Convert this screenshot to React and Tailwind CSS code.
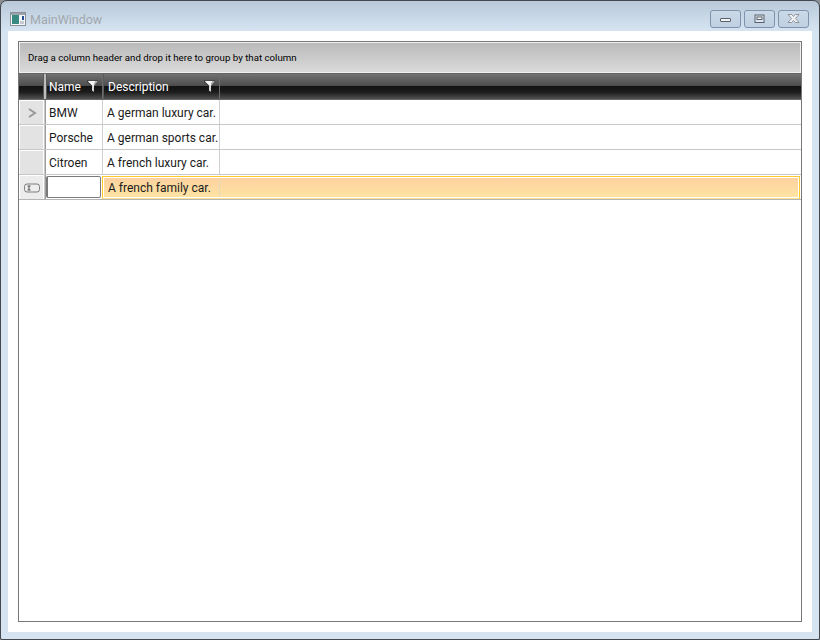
const font = { fontFamily: 'Roboto, "Open Sans", sans-serif' };

function Funnel() {
  return (
    <svg width="11" height="13" viewBox="0 0 11 13" className="block">
      <path d="M0 0.5H11V2L7.5 6V12.5L4.5 10.5V6L0 2Z" fill="#1e1e1e" opacity="0.6" />
      <path d="M1 1H10.5V2L7 6V12L5 10.5V5.5L1 1.8Z" fill="#a8a8a8" />
      <path d="M1.5 1H8.5L7 3.5L6.4 11.5L5.4 10.8V5.5L1.5 1.8Z" fill="#f5f5f5" />
    </svg>
  );
}

function HeaderCell({ className, label, filter }) {
  return (
    <div className={`flex items-center justify-between h-full border-r border-[#6c6c6c] border-l border-l-[#5a5a5a] pr-[4px] ${className}`}>
      <span className="text-white text-[12px] leading-none mt-[1px]">{label}</span>
      {filter && <Funnel />}
    </div>
  );
}

function Row({ name, desc, indicator }) {
  return (
    <div className="flex h-[25px] border-b border-[#c8c8c8] bg-white">
      <div className="w-[25px] shrink-0 bg-[#e3e3e3] border border-white border-b-0 flex items-center justify-center">
        {indicator && (
          <svg width="10" height="10" viewBox="0 0 10 10">
            <path d="M2 1L8 5L2 9" fill="none" stroke="#9a9a9a" strokeWidth="2" />
          </svg>
        )}
      </div>
      <div className="w-[2px] shrink-0 bg-[#9e9e9e] border-l border-[#c8c8c8]" />
      <div className="w-[57px] shrink-0 border-r border-[#d0d0d0] pl-[3px] pt-[2px] flex items-center text-[12px] text-[#1a1a1a]">{name}</div>
      <div className="w-[117px] shrink-0 border-r border-[#d0d0d0] pl-[4px] pt-[2px] flex items-center text-[12px] text-[#1a1a1a] whitespace-nowrap">{desc}</div>
      <div className="flex-1" />
    </div>
  );
}

export default function App() {
  return (
    <div className="w-[820px] h-[640px] bg-[#8a8f96]" style={font}>
      <div className="w-full h-full flex flex-col rounded-t-[7px] rounded-b-[2px] border border-[#45484c] bg-[linear-gradient(#b9c9d9_0px,#d6e4f2_30px)] overflow-hidden">
        <div className="h-[30px] shrink-0 flex justify-between pl-[9px] pr-[10px] pt-[9px]">
          <div className="flex items-start">
            <svg width="16" height="14" viewBox="0 0 16 14" className="mt-[2px]">
              <rect x="0.5" y="0.5" width="15" height="13" fill="#f4f6f8" stroke="#8a9098" />
              <rect x="1" y="1" width="14" height="2" fill="#9aa2aa" />
              <rect x="2" y="3" width="7" height="9" fill="#3a8a84" />
              <rect x="12" y="4" width="2" height="4" fill="#26509a" />
              <rect x="10" y="9" width="4" height="3" fill="#c7ccd2" />
            </svg>
            <span className="ml-[4px] text-[12.5px] leading-[19px] text-[#a2a8ae]">MainWindow</span>
          </div>
          <div className="flex gap-[3px] h-[18px]">
            {[
              <rect key="a" x="0.5" y="1.5" width="10" height="3" rx="0.5" fill="#f2f4f6" stroke="#59606a" />,
              <g key="b"><rect x="1" y="-2" width="9" height="7.5" fill="#dfe7f0" stroke="#59606a" /><rect x="3" y="0" width="5" height="2.5" fill="#fff" stroke="#59606a" /></g>,
              <path key="c" d="M0 -2.5H3.5L5.5 -0.5L7.5 -2.5H11L7.4 1.5L11 5.5H7.5L5.5 3.5L3.5 5.5H0L3.6 1.5Z" fill="#f2f4f6" stroke="#7a8088" strokeWidth="0.8" />,
            ].map((icon, i) => (
              <div key={i} className="w-[31px] h-[18px] rounded-[3px] border border-[#7f93ad] bg-gradient-to-b from-[#cbd9e8] to-[#c0d0e2] flex items-center justify-center">
                <svg width="13" height="10" viewBox="-1 -3 13 10">{icon}</svg>
              </div>
            ))}
          </div>
        </div>
        <div className="mx-[7px] mb-[7px] flex-1 bg-white p-[10px] flex">
          <div className="flex-1 border border-[#777] bg-white flex flex-col">
            <div className="h-[31px] shrink-0 border border-[#f0f0f0] bg-gradient-to-b from-[#bababa] to-[#dadada] flex items-center pl-[8px] pt-[1px] text-[9.7px] text-black whitespace-nowrap">
              Drag a column header and drop it here to group by that column
            </div>
            <div className="h-[27px] shrink-0 flex border-y border-[#666] bg-[linear-gradient(#727272_0%,#4c4c4c_48%,#121212_50%,#1c1c1c_72%,#505050_100%)]">
              <div className="w-[25px] shrink-0 border-r border-[#5a5a5a]" />
              <div className="w-[2px] shrink-0 bg-[#bdbdbd]" />
              <HeaderCell className="w-[57px] shrink-0 pl-[2px]" label="Name" filter />
              <HeaderCell className="w-[117px] shrink-0 pl-[4px]" label="Description" filter />
              <div className="flex-1" />
            </div>
            <Row name="BMW" desc="A german luxury car." indicator />
            <Row name="Porsche" desc="A german sports car." />
            <Row name="Citroen" desc="A french luxury car." />
            <div className="flex h-[25px] border-b border-[#b5b5b5] bg-white">
              <div className="w-[25px] shrink-0 bg-[#ececec] border border-white border-b-0 flex items-center justify-center">
                <svg width="16" height="10" viewBox="0 0 16 10">
                  <rect x="0.5" y="1" width="15" height="8" rx="2.5" fill="#eeeeee" stroke="#7d7d7d" />
                  <path d="M3.5 3H6.5M5 3V7M3.5 7H6.5" stroke="#444" strokeWidth="0.9" fill="none" />
                </svg>
              </div>
              <div className="w-[2px] shrink-0 bg-[#9e9e9e] border-l border-[#c8c8c8]" />
              <div className="w-[55px] shrink-0 my-[1px] rounded-[2px] border border-[#7a7a7a] border-l-2 bg-white" />
              <div className="flex-1 ml-[1px] mr-[1px] mt-[1px] border border-[#ffc92b] border-b-[#ffe28e] flex">
                <div className="flex-1 border border-white bg-gradient-to-b from-[#fdd1a0] to-[#fee4a2] flex items-center">
                  <div className="w-[116px] h-full border-r border-[#e5d8b8] pl-[4px] pt-[1px] flex items-center text-[12px] text-[#1a1a1a] whitespace-nowrap">A french family car.</div>
                </div>
              </div>
            </div>
            <div className="flex-1" />
          </div>
        </div>
      </div>
    </div>
  );
}
